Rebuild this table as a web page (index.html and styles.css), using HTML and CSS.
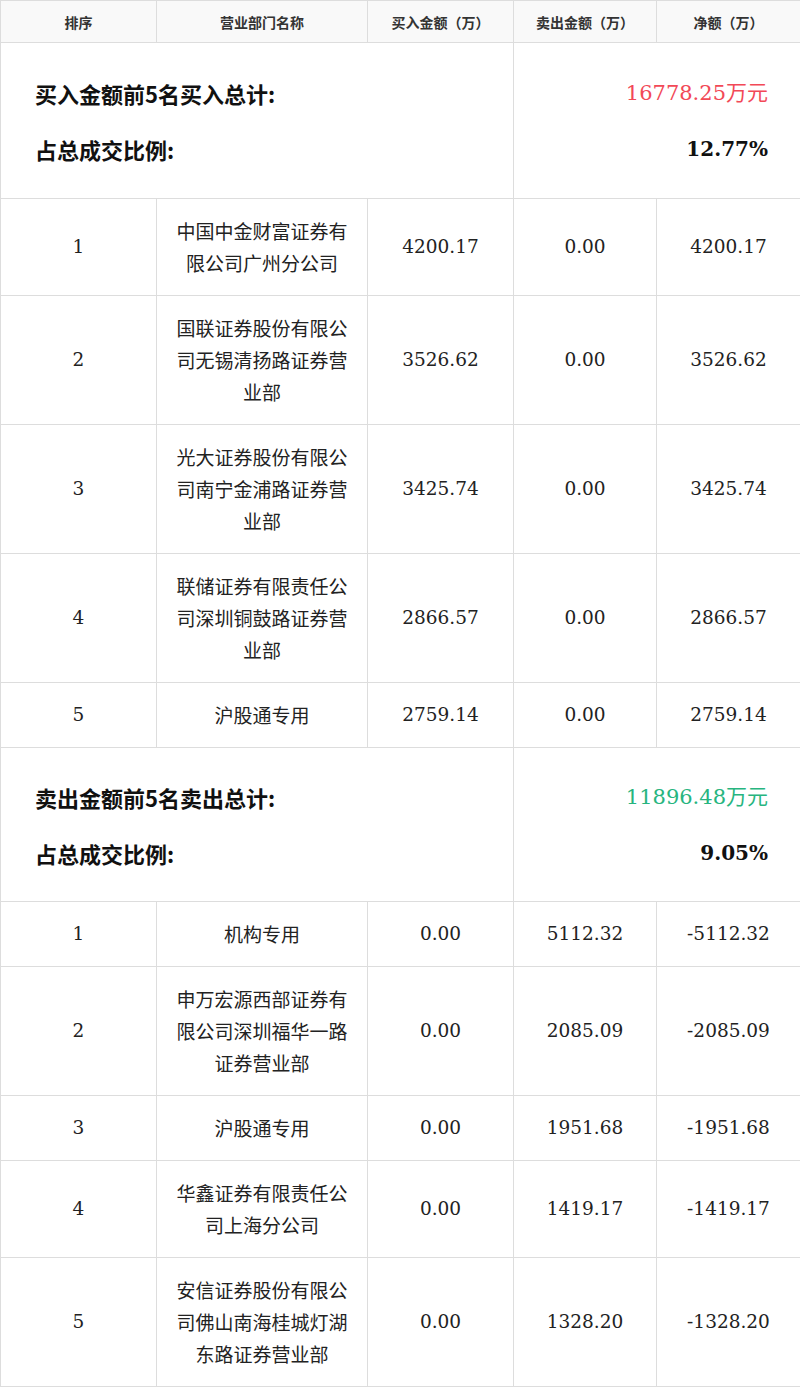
FILE: index.html
```html
<!DOCTYPE html>
<html lang="zh">
<head>
<meta charset="utf-8">
<link rel="stylesheet" href="styles.css">
</head>
<body>
<table class="lhb">
  <colgroup>
    <col class="c1"><col class="c2"><col class="c3"><col class="c4"><col class="c5">
  </colgroup>
  <thead>
    <tr><th>排序</th><th>营业部门名称</th><th>买入金额（万）</th><th>卖出金额（万）</th><th>净额（万）</th></tr>
  </thead>
  <tbody>
    <tr class="sum sum-buy">
      <td colspan="3" class="sum-l"><p>买入金额前5名买入总计:</p><p>占总成交比例:</p></td>
      <td colspan="2" class="sum-r"><p class="up">16778.25万元</p><p class="pct">12.77%</p></td>
    </tr>
    <tr><td>1</td><td class="name">中国中金财富证券有限公司广州分公司</td><td>4200.17</td><td>0.00</td><td>4200.17</td></tr>
    <tr><td>2</td><td class="name">国联证券股份有限公司无锡清扬路证券营业部</td><td>3526.62</td><td>0.00</td><td>3526.62</td></tr>
    <tr><td>3</td><td class="name">光大证券股份有限公司南宁金浦路证券营业部</td><td>3425.74</td><td>0.00</td><td>3425.74</td></tr>
    <tr><td>4</td><td class="name">联储证券有限责任公司深圳铜鼓路证券营业部</td><td>2866.57</td><td>0.00</td><td>2866.57</td></tr>
    <tr><td>5</td><td class="name">沪股通专用</td><td>2759.14</td><td>0.00</td><td>2759.14</td></tr>
    <tr class="sum sum-sell">
      <td colspan="3" class="sum-l"><p>卖出金额前5名卖出总计:</p><p>占总成交比例:</p></td>
      <td colspan="2" class="sum-r"><p class="down">11896.48万元</p><p class="pct">9.05%</p></td>
    </tr>
    <tr><td>1</td><td class="name">机构专用</td><td>0.00</td><td>5112.32</td><td>-5112.32</td></tr>
    <tr><td>2</td><td class="name">申万宏源西部证券有限公司深圳福华一路证券营业部</td><td>0.00</td><td>2085.09</td><td>-2085.09</td></tr>
    <tr><td>3</td><td class="name">沪股通专用</td><td>0.00</td><td>1951.68</td><td>-1951.68</td></tr>
    <tr><td>4</td><td class="name">华鑫证券有限责任公司上海分公司</td><td>0.00</td><td>1419.17</td><td>-1419.17</td></tr>
    <tr><td>5</td><td class="name">安信证券股份有限公司佛山南海桂城灯湖东路证券营业部</td><td>0.00</td><td>1328.20</td><td>-1328.20</td></tr>
  </tbody>
</table>
</body>
</html>
```
FILE: styles.css
```css
html, body {
  margin: 0;
  padding: 0;
  background: #fff;
}
.lhb {
  width: 800px;
  border-collapse: collapse;
  table-layout: fixed;
  font-family: "DejaVu Serif", "Noto Sans CJK SC", serif;
  color: #222;
}
.c1 { width: 156px; }
.c2 { width: 211px; }
.c3 { width: 146px; }
.c4 { width: 143px; }
.c5 { width: 144px; }
.lhb th, .lhb td {
  border: 1px solid #dddddd;
  text-align: center;
  vertical-align: middle;
}
.lhb th {
  background: #f9f9f9;
  height: 41px;
  padding: 0;
  font-size: 14px;
  font-weight: bold;
  font-family: "Noto Sans CJK SC", sans-serif;
  color: #333;
}
.lhb td {
  font-size: 18.5px;
  line-height: 32px;
  padding: 16px 6px;
  color: #222;
}
.lhb td.name {
  font-family: "Noto Sans CJK SC", sans-serif;
  padding: 16px 19px;
  font-size: 19px;
}
.lhb td.sum-l, .lhb td.sum-r {
  padding: 34px 32px 32px 34px;
  vertical-align: top;
}
.lhb .sum-buy td.sum-l, .lhb .sum-buy td.sum-r {
  padding-bottom: 33px;
}
.lhb .sum-sell td.sum-l, .lhb .sum-sell td.sum-r {
  padding-top: 33px;
}
.sum p {
  margin: 0;
  line-height: 32px;
  font-size: 20px;
}
.sum p + p {
  margin-top: 24px;
}
.sum-l p {
  text-align: left;
  font-weight: bold;
  font-size: 22px;
  font-family: "Noto Sans CJK SC", sans-serif;
  color: #111;
}
.sum-r p {
  text-align: right;
}
.sum-r .up { color: #f24957; font-size: 21px; }
.sum-r .down { color: #27b57f; font-size: 21px; }
.sum-r .pct { font-weight: bold; color: #111; }
```
